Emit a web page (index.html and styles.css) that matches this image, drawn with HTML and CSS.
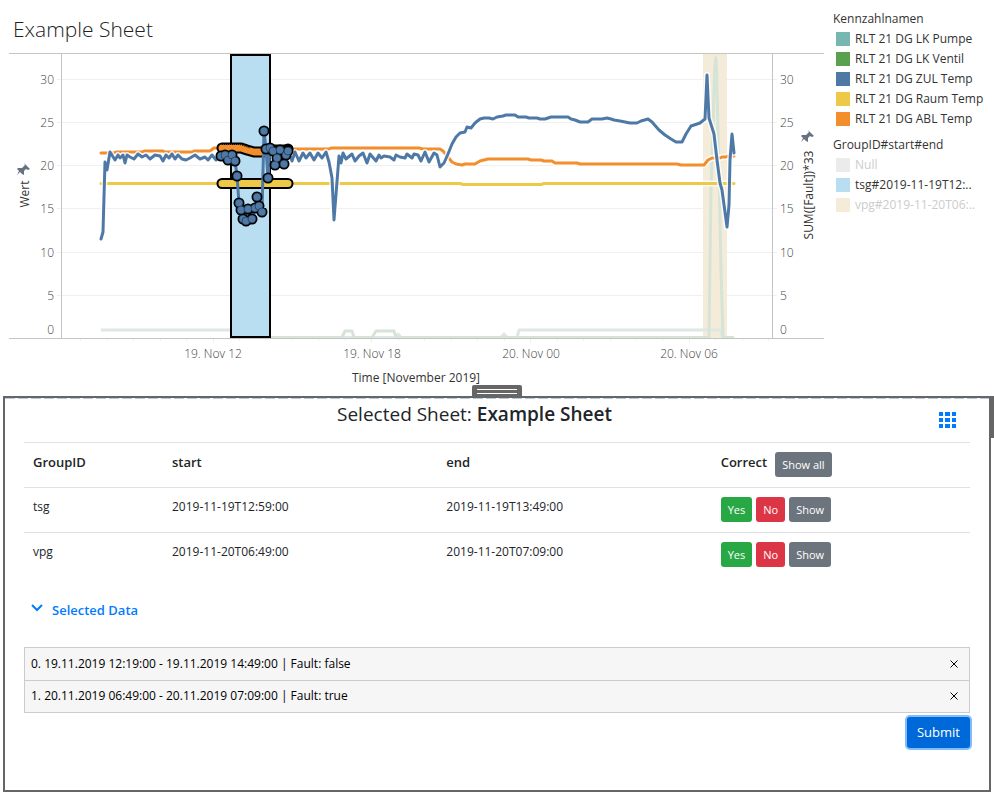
FILE: index.html
```html
<!DOCTYPE html>
<html lang="en">
<head>
<meta charset="utf-8">
<meta name="viewport" content="width=device-width, initial-scale=1">
<title>Example Sheet</title>
<link rel="stylesheet" href="styles.css">
</head>
<body>
<section class="sheet">
  <div class="chart">
    <h1 class="sheet-title">Example Sheet</h1>
    <svg class="plot" viewBox="0 48 824 338" role="img" aria-label="Temperatures over time">
      <g class="grid">
        <path d="M57 79.500H777M57 122.500H777M57 165.500H777M57 208.500H777M57 252.500H777M57 295.500H777"/>
        <path d="M80.500 339v2M107.500 339v2M133.500 339v2M160.500 339v2M186.500 339v2M213.500 339v4M239.500 339v2M265.500 339v2M292.500 339v2M318.500 339v2M345.500 339v2M371.500 339v4M398.500 339v2M424.500 339v2M451.500 339v2M477.500 339v2M504.500 339v2M530.500 339v4M557.500 339v2M583.500 339v2M610.500 339v2M636.500 339v2M662.500 339v2M689.500 339v4M715.500 339v2M742.500 339v2M768.500 339v2"/>
      </g>
      <rect class="band-vpg" x="703" y="54" width="24" height="284"/>
      <g class="faded">
        <path class="teal" d="M101 330H232M270 337.500H395L398 334L401 337.500H501L504 334L507 337.500H517L519 330H720L723 337.500"/>
        <path class="green" d="M270 337.500H342L345 331H352L354 337.500H372L376 331H394L396 337.500H709L711 190L714 90Q716 25 717 90L719 170L721 270L723 337.500H734"/>
      </g>
      <rect class="band-tsg" x="231" y="55" width="39" height="282"/>
      <g class="series">
        <path class="halo" d="M101 183.500H460L463 184.500H541L544 183.500H734"/>
        <path class="yellow" d="M101 183.500H460L463 184.500H541L544 183.500H734"/>
        <path class="halo" d="M101 153H114L116 152H142L145 151H163L165 152H192L194 151H210L214 148H222M292 149H329L331 148H419L423 149H440L443 151L448 157L452 162L456 164L462 165L465 164H475L480 161L488 159H528L531 160H541L544 161H552L555 163H577L580 164H677L681 165H704L708 160L712 158H720L722 157H726L728 156H734"/>
        <path class="orange" d="M101 153H114L116 152H142L145 151H163L165 152H192L194 151H210L214 148H222M292 149H329L331 148H419L423 149H440L443 151L448 157L452 162L456 164L462 165L465 164H475L480 161L488 159H528L531 160H541L544 161H552L555 163H577L580 164H677L681 165H704L708 160L712 158H720L722 157H726L728 156H734"/>
        <path class="mark-edge" d="M222 183.500H288"/>
        <path class="mark-yellow" d="M222 183.500H288"/>
        <path class="mark-edge" d="M222 148H241L247 150L254 152H264L270 150H288"/>
        <path class="mark-orange" d="M222 148H241L247 150L254 152H264L270 150H288"/>
        <path class="mark-dots" d="M222 179.500H288M222 187.500H288M222 144.500H240L250 148"/>
        <path class="halo" d="M101 239L103 232L105 162L107 170L110 152L115 160L118 155L120 158L123 155L125 163L127 155L130 157L134 159L138 154L142 157L146 155L150 159L155 155L160 156L163 161L166 155L169 158L172 154L175 159L178 155L182 159L186 160L190 158L195 155L200 159L205 157L208 160L212 155L216 160L220 156"/>
        <path class="halo" d="M292 161L295 152L299 161L303 153L306 158L310 153L314 160L318 153L322 158L326 152L329 162L332 178L334 220L339 156L341 163L343 153L346 159L352 154L355 161L359 156L363 153L367 163L370 154L376 161L379 155L381 158L384 156L390 157L394 160L396 155L400 157L405 158L407 154L412 158L414 154L418 155L421 161L425 152L429 162L434 153L437 155L440 167L444 163L448 154L452 144L456 137L460 133L465 132L467 127L471 128L475 123L480 119L484 118H489L493 119L497 117L503 116L506 115H515L518 117H526L529 118H537L540 119H545L551 117H568L571 119L575 120L580 122H588L592 119H602L607 118L611 119L614 120L620 121L625 122L630 123H637L641 121L648 119L652 122L659 130L665 135L671 139L676 142H682L686 134L691 126L700 123L705 119L707 75L709 118L714 134L717 160L720 183L722 190L727 227L729 205L730 160L732 134L734 153"/>
        <path class="blue" d="M101 239L103 232L105 162L107 170L110 152L115 160L118 155L120 158L123 155L125 163L127 155L130 157L134 159L138 154L142 157L146 155L150 159L155 155L160 156L163 161L166 155L169 158L172 154L175 159L178 155L182 159L186 160L190 158L195 155L200 159L205 157L208 160L212 155L216 160L221 156L225 155L228 161L232 155L235 161L237 176L239 203L241 210L243 219L246 221L248 209L252 219L255 208L257 197L259 206L262 212L264 131L266 149L268 178L270 148L273 151L275 165L277 158L280 150L284 164L288 151L292 161L295 152L299 161L303 153L306 158L310 153L314 160L318 153L322 158L326 152L329 162L332 178L334 220L339 156L341 163L343 153L346 159L352 154L355 161L359 156L363 153L367 163L370 154L376 161L379 155L381 158L384 156L390 157L394 160L396 155L400 157L405 158L407 154L412 158L414 154L418 155L421 161L425 152L429 162L434 153L437 155L440 167L444 163L448 154L452 144L456 137L460 133L465 132L467 127L471 128L475 123L480 119L484 118H489L493 119L497 117L503 116L506 115H515L518 117H526L529 118H537L540 119H545L551 117H568L571 119L575 120L580 122H588L592 119H602L607 118L611 119L614 120L620 121L625 122L630 123H637L641 121L648 119L652 122L659 130L665 135L671 139L676 142H682L686 134L691 126L700 123L705 119L707 75L709 118L714 134L717 160L720 183L722 190L727 227L729 205L730 160L732 134L734 153"/>
      </g>
      <!-- Each cluster of readings shares one outline -->
      <path class="dots-edge" d="M221 156h0M225 155h0M228 160h0M232 155h0M235 161h0M237 176h0M239 203h0M241 210h0M248 209h0M243 219h0M246 221h0M252 219h0M257 197h0M255 208h0M259 206h0M262 212h0M264 131h0M266 149h0M268 178h0M270 148h0M273 151h0M275 165h0M277 158h0M280 150h0M284 164h0M286 155h0M288 149h0M288 151h0"/>
      <g class="dots">
        <circle cx="221" cy="156" r="4"/><circle cx="225" cy="155" r="4"/><circle cx="228" cy="160" r="4"/><circle cx="232" cy="155" r="4"/><circle cx="235" cy="161" r="4"/><circle cx="237" cy="176" r="4"/><circle cx="239" cy="203" r="4"/><circle cx="241" cy="210" r="4"/><circle cx="248" cy="209" r="4"/><circle cx="243" cy="219" r="4"/><circle cx="246" cy="221" r="4"/><circle cx="252" cy="219" r="4"/><circle cx="257" cy="197" r="4"/><circle cx="255" cy="208" r="4"/><circle cx="259" cy="206" r="4"/><circle cx="262" cy="212" r="4"/><circle cx="264" cy="131" r="4"/><circle cx="266" cy="149" r="4"/><circle cx="268" cy="178" r="4"/><circle cx="270" cy="148" r="4"/><circle cx="273" cy="151" r="4"/><circle cx="275" cy="165" r="4"/><circle cx="277" cy="158" r="4"/><circle cx="280" cy="150" r="4"/><circle cx="284" cy="164" r="4"/><circle cx="286" cy="155" r="4"/><circle cx="288" cy="151" r="4"/>
      </g>
      <path class="axis" d="M9 53.500H824M9 338.500H824M61.500 54V338M772.500 54V338"/>
      <g class="tick end">
        <text x="54" y="84">30</text><text x="54" y="127">25</text><text x="54" y="170">20</text><text x="54" y="213">15</text><text x="54" y="257">10</text><text x="54" y="300">5</text><text x="54" y="334">0</text>
      </g>
      <g class="tick">
        <text x="780" y="84">30</text><text x="780" y="127">25</text><text x="780" y="170">20</text><text x="780" y="213">15</text><text x="780" y="257">10</text><text x="780" y="300">5</text><text x="780" y="334">0</text>
      </g>
      <g class="tick mid">
        <text x="213" y="358">19. Nov 12</text><text x="372" y="358">19. Nov 18</text><text x="531" y="358">20. Nov 00</text><text x="689" y="358">20. Nov 06</text>
      </g>
      <g class="axis-name">
        <text x="416" y="382">Time [November 2019]</text>
        <text transform="translate(29 194) rotate(-90)">Wert</text>
        <text transform="translate(813 195) rotate(-90)">SUM([Fault])*33</text>
      </g>
      <g class="pin">
        <path id="pin" d="M24 163L30 169L28 170L26 169L24 171V175L22 174L20 172L17 175L19 171L17 169L18 168L22 168L25 165Z"/>
        <use href="#pin" x="784" y="-33"/>
      </g>
    </svg>
  </div>
  <aside class="legends">
    <h2>Kennzahlnamen</h2>
    <ul>
      <li><i class="swatch sw-teal"></i>RLT 21 DG LK Pumpe</li>
      <li><i class="swatch sw-green"></i>RLT 21 DG LK Ventil</li>
      <li><i class="swatch sw-blue"></i>RLT 21 DG ZUL Temp</li>
      <li><i class="swatch sw-yellow"></i>RLT 21 DG Raum Temp</li>
      <li><i class="swatch sw-orange"></i>RLT 21 DG ABL Temp</li>
    </ul>
    <h2>GroupID#start#end</h2>
    <ul>
      <li class="off"><i class="swatch sw-null"></i>Null</li>
      <li><i class="swatch sw-tsg"></i>tsg#2019-11-19T12:..</li>
      <li class="off"><i class="swatch sw-vpg"></i>vpg#2019-11-20T06:..</li>
    </ul>
  </aside>
</section>

<main class="panel">
  <button class="handle" type="button" aria-label="Resize panel"><span></span><span></span></button>
  <div class="side-tab"></div>
  <header class="panel-head">
    <h2>Selected Sheet: <b>Example Sheet</b></h2>
    <button class="icon-btn" type="button" aria-label="Choose sheet">
      <svg width="17" height="16" viewBox="0 0 17 16"><path d="M0 0h4v4H0zM6 0h5v4H6zM13 0h4v4h-4zM0 6h4v4H0zM6 6h5v4H6zM13 6h4v4h-4zM0 12h4v4H0zM6 12h5v4H6zM13 12h4v4h-4z"/></svg>
    </button>
  </header>
  <table class="groups">
    <thead>
      <tr><th class="c-id">GroupID</th><th class="c-time">start</th><th class="c-time">end</th><th><div class="correct">Correct <button class="btn grey" type="button">Show all</button></div></th></tr>
    </thead>
    <tbody>
      <tr><td>tsg</td><td>2019-11-19T12:59:00</td><td>2019-11-19T13:49:00</td><td><div class="actions"><button class="btn green-btn" type="button">Yes</button><button class="btn red" type="button">No</button><button class="btn grey" type="button">Show</button></div></td></tr>
      <tr><td>vpg</td><td>2019-11-20T06:49:00</td><td>2019-11-20T07:09:00</td><td><div class="actions"><button class="btn green-btn" type="button">Yes</button><button class="btn red" type="button">No</button><button class="btn grey" type="button">Show</button></div></td></tr>
    </tbody>
  </table>
  <button class="toggle" type="button" aria-expanded="true">
    <svg width="12" height="14" viewBox="0 0 12 14"><path d="M1 2L6 7L11 2"/></svg>
    Selected Data
  </button>
  <ul class="ranges">
    <li><span>0. 19.11.2019 12:19:00 - 19.11.2019 14:49:00 | Fault: false</span><button type="button" aria-label="Remove range 0"><svg width="8" height="8" viewBox="0 0 8 8"><path d="M0.500 0.500L7.500 7.500M7.500 0.500L0.500 7.500"/></svg></button></li>
    <li><span>1. 20.11.2019 06:49:00 - 20.11.2019 07:09:00 | Fault: true</span><button type="button" aria-label="Remove range 1"><svg width="8" height="8" viewBox="0 0 8 8"><path d="M0.500 0.500L7.500 7.500M7.500 0.500L0.500 7.500"/></svg></button></li>
  </ul>
  <div class="foot"><button class="submit" type="button">Submit</button></div>
</main>
</body>
</html>
```
FILE: styles.css
```css
* { box-sizing: border-box; }
body { margin: 0; background: #fff; color: #212529; font: 13px/20px "Open Sans", "Noto Sans", sans-serif; }
h1, h2, ul { margin: 0; padding: 0; font-weight: 400; }
ul { list-style: none; }
button { font: inherit; cursor: pointer; border: 0; padding: 0; background: none; }
svg { display: block; }

.sheet { display: flex; padding-bottom: 10px; }
.chart { flex: 1; min-width: 0; }
.sheet-title { height: 48px; padding: 14px 13px 0; font-size: 21px; line-height: 30px; font-weight: 300; color: #222; }
.plot { width: 100%; }
.plot path { fill: none; }
.grid { stroke: #f0f0f0; }
.axis { stroke: #c4c4c4; }
.band-vpg { fill: #f4ecd9; }
.band-tsg { fill: #b9ddf1; stroke: #000; stroke-width: 2; }
.faded { stroke-width: 3; stroke-linejoin: round; }
.teal { stroke: #dde8e6; }
.green { stroke: #d5e4d7; }
.series { stroke-width: 3; stroke-linejoin: round; stroke-linecap: round; }
.halo { stroke: #fff; stroke-width: 6; stroke-opacity: .8; }
.yellow { stroke: #edc948; }
.orange { stroke: #f28e2b; }
.blue { stroke: #4e79a7; }
.mark-edge { stroke: #000; stroke-width: 11; }
.mark-yellow { stroke: #edc948; stroke-width: 7; }
.mark-orange { stroke: #f28e2b; stroke-width: 7; }
.mark-dots { stroke: #000; stroke-width: 1; stroke-dasharray: 1 1; stroke-linecap: butt; }
.dots-edge { stroke: #000; stroke-width: 11; stroke-linecap: round; }
.dots { fill: #4e79a7; stroke: #000; stroke-width: 1; stroke-opacity: .4; }
.tick { font-size: 12px; font-weight: 300; fill: #444; }
.end { text-anchor: end; }
.mid, .axis-name { text-anchor: middle; }
.axis-name { font-size: 12px; fill: #333; }
.plot .pin path { fill: #66727f; }

.legends { flex: 0 0 170px; padding: 9px 0 0 9px; white-space: nowrap; font-size: 12px; font-weight: 300; color: #333; }
.legends h2 { font-size: 12px; font-weight: 400; line-height: 20px; }
.legends ul { padding-left: 3px; margin-bottom: 6px; }
.legends li { display: flex; align-items: center; gap: 5px; height: 20px; }
.legends .off { color: #ccc; }
.swatch { width: 14px; height: 14px; }
.sw-teal { background: #76b7b2; }
.sw-green { background: #59a14f; }
.sw-blue { background: #4e79a7; }
.sw-yellow { background: #edc948; }
.sw-orange { background: #f28e2b; }
.sw-null { background: #ebebeb; }
.sw-tsg { background: #b9ddf1; }
.sw-vpg { background: #f4ecd9; }

.panel { position: relative; margin: 0 3px 3px; padding: 0 19px 42px; border: 2px solid #666; }
.panel::before { content: ""; position: absolute; top: 0; left: 0; right: 0; height: 1px; background: repeating-linear-gradient(90deg, #b8c8d8 0 10px, #fff 10px 13px); }
.handle { position: absolute; top: -13px; left: 50%; margin-left: -25px; width: 50px; height: 13px; border-radius: 2px; background: #666; display: flex; flex-direction: column; align-items: center; justify-content: center; gap: 3px; }
.handle span { width: 40px; height: 1px; background: #fff; }
.side-tab { position: absolute; top: -2px; right: -5px; width: 5px; height: 42px; background: #666; }
.panel-head { display: flex; align-items: center; height: 44px; padding-right: 14px; }
.panel-head h2 { flex: 1; padding: 0 14px 12px 0; text-align: center; font-size: 19px; line-height: 28px; }
.panel-head b { font-weight: 600; }
.icon-btn svg { fill: #007bff; }

.groups { width: 100%; table-layout: fixed; border-collapse: collapse; }
.groups th, .groups td { height: 45px; padding: 9px; border-top: 1px solid #dee2e6; text-align: left; vertical-align: top; }
.groups th { font-weight: 600; }
.groups td { font-size: 12px; }
.c-id { width: 139px; }
.c-time { width: 29%; }
.correct { display: flex; gap: 8px; }
.actions { display: flex; gap: 4px; }
.btn { height: 25px; padding: 1px 7px 0; border-radius: 3px; font-size: 11px; font-weight: 400; color: #fff; }
.grey { background: #6c757d; }
.green-btn { background: #28a745; }
.red { background: #dc3545; }
.toggle { display: flex; align-items: center; gap: 9px; margin: 22px 7px 27px; color: #007bff; font-weight: 600; }
.toggle path { fill: none; stroke: #007bff; stroke-width: 2; }

.ranges { border: 1px solid #ccc; background: #f6f6f6; color: #000; font-size: 12px; }
.ranges li { display: flex; align-items: center; justify-content: space-between; height: 32px; padding: 0 11px 0 6px; }
.ranges li + li { border-top: 1px solid #ccc; }
.ranges path { stroke: #000; stroke-width: 1; }
.foot { display: flex; justify-content: flex-end; padding-top: 4px; }
.submit { height: 31px; padding: 0 10px; border-radius: 3px; background: #0069d9; color: #fff; box-shadow: 0 0 0 2px #80bdff; }
```
